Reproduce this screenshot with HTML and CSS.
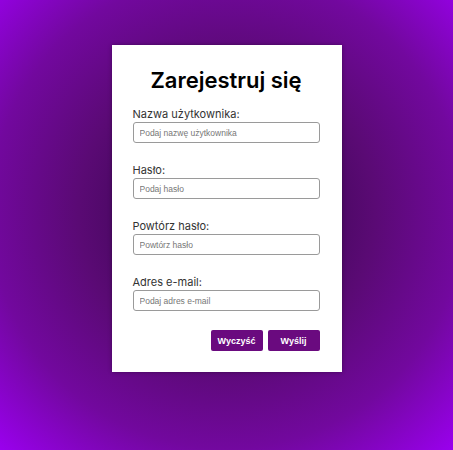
FILE: index.html
```html
<!DOCTYPE html>
<html lang="pl">
<head>
<meta charset="utf-8">
<title>Zarejestruj się</title>
<link rel="stylesheet" href="styles.css">
</head>
<body>
<main class="page">
  <form class="card">
    <h1 class="title">Zarejestruj się</h1>
    <div class="field">
      <label class="label" for="u">Nazwa użytkownika:</label>
      <input class="input" id="u" type="text" placeholder="Podaj nazwę użytkownika">
    </div>
    <div class="field">
      <label class="label" for="p">Hasło:</label>
      <input class="input" id="p" type="password" placeholder="Podaj hasło">
    </div>
    <div class="field">
      <label class="label" for="p2">Powtórz hasło:</label>
      <input class="input" id="p2" type="password" placeholder="Powtórz hasło">
    </div>
    <div class="field">
      <label class="label" for="e">Adres e-mail:</label>
      <input class="input" id="e" type="email" placeholder="Podaj adres e-mail">
    </div>
    <div class="actions">
      <button class="btn" type="reset">Wyczyść</button>
      <button class="btn" type="submit">Wyślij</button>
    </div>
  </form>
</main>
</body>
</html>
```

FILE: styles.css
```css
* { box-sizing: border-box; }
html, body { margin: 0; height: 100%; }
body {
  background: radial-gradient(circle farthest-corner at 50% 47%, #2a0540 0%, #5a0a74 45%, #72089e 72%, #9a00ee 100%);
  font-family: Inter, "Noto Sans", sans-serif;
}
.page {
  display: flex;
  justify-content: center;
  padding-top: 45px;
}
.card {
  width: 230px;
  background: #fff;
  padding: 20px 22px 21px 21px;
  box-shadow: 0 0 4px rgba(0,0,0,0.35);
  display: flex;
  flex-direction: column;
}
.title {
  margin: 0 0 12px;
  text-align: center;
  font-size: 22px;
  font-weight: 600;
  line-height: 30px;
  color: #000;
}
.field {
  display: flex;
  flex-direction: column;
  margin-bottom: 20px;
}
.label {
  font-size: 11px;
  line-height: 14px;
  color: #333;
  margin-bottom: 1px;
}
.input {
  height: 21px;
  border: 1px solid #9a9a9a;
  border-radius: 3px;
  padding: 0 6px;
  font-family: "Liberation Sans", Arial, sans-serif;
  font-size: 8.5px;
  color: #222;
  outline: none;
}
.input::placeholder { color: #777; }
.actions {
  display: flex;
  justify-content: flex-end;
  gap: 5px;
  margin-top: -1px;
}
.btn {
  width: 52px;
  height: 21px;
  border: none;
  border-radius: 2px;
  background: #6a0a7f;
  color: #fff;
  font-family: "Liberation Sans", Arial, sans-serif;
  font-size: 9px;
  font-weight: bold;
  padding: 0;
}
```
